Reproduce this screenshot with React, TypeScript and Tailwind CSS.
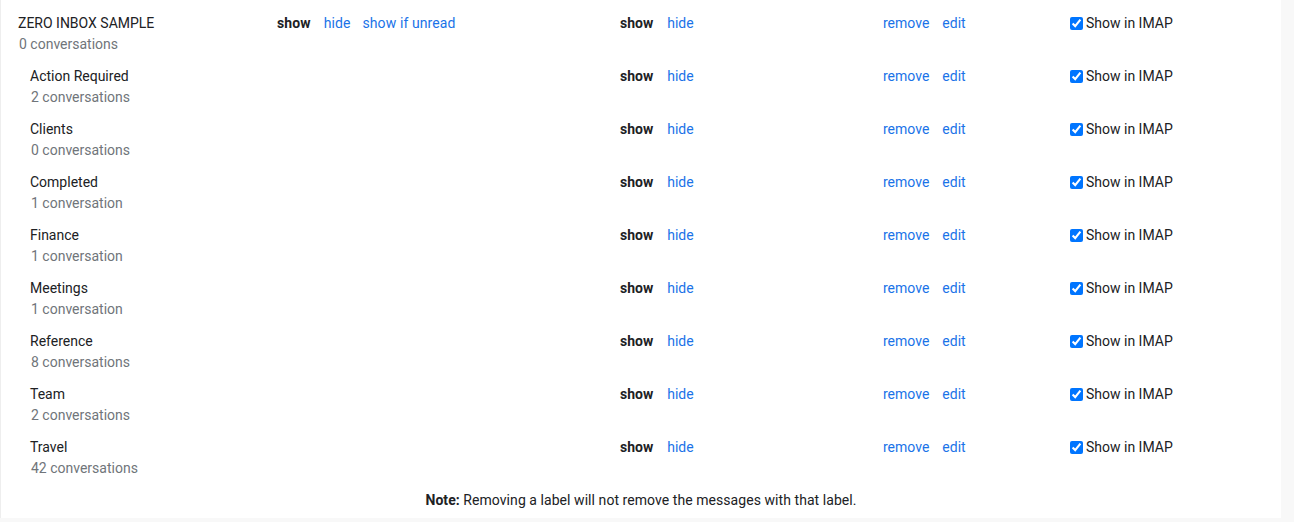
import React from 'react';

interface LabelRow {
  name: string;
  count: string;
  nested: boolean;
  unreadOption?: boolean;
}

const ROWS: LabelRow[] = [
  { name: 'ZERO INBOX SAMPLE', count: '0 conversations', nested: false, unreadOption: true },
  { name: 'Action Required', count: '2 conversations', nested: true },
  { name: 'Clients', count: '0 conversations', nested: true },
  { name: 'Completed', count: '1 conversation', nested: true },
  { name: 'Finance', count: '1 conversation', nested: true },
  { name: 'Meetings', count: '1 conversation', nested: true },
  { name: 'Reference', count: '8 conversations', nested: true },
  { name: 'Team', count: '2 conversations', nested: true },
  { name: 'Travel', count: '42 conversations', nested: true },
];

const Link: React.FC<{ children: React.ReactNode }> = ({ children }) => (
  <span className="text-[#1a73e8] cursor-pointer">{children}</span>
);

const LabelRowView: React.FC<{ row: LabelRow }> = ({ row }) => (
  <div className="flex h-[53px] items-start">
    <div className={`w-[276px] shrink-0 ${row.nested ? 'pl-[29px]' : 'pl-[17px]'}`}>
      <div className="leading-5 text-[#202124]">{row.name}</div>
      <div className="mt-[1px] leading-5 text-[#70757a] pl-[1px]">{row.count}</div>
    </div>
    <div className="w-[343px] shrink-0 flex gap-3 leading-5 tracking-[0.1px]">
      {row.unreadOption && (
        <>
          <span className="font-bold text-[#202124] pr-[1px]">show</span>
          <Link>hide</Link>
          <Link>show if unread</Link>
        </>
      )}
    </div>
    <div className="w-[263px] shrink-0 flex gap-[14px] leading-5">
      <span className="font-bold text-[#202124]">show</span>
      <Link>hide</Link>
    </div>
    <div className="w-[186px] shrink-0 flex gap-[13px] leading-5">
      <Link>remove</Link>
      <Link>edit</Link>
    </div>
    <label className="flex items-center leading-5 text-[#202124] pl-[1px]">
      <input type="checkbox" defaultChecked className="w-[13px] h-[13px] m-0 mr-[3px]" />
      Show in IMAP
    </label>
  </div>
);

export default function App() {
  return (
    <div className="w-[1294px] h-[522px] bg-[#f8f8f8] overflow-hidden" style={{ fontFamily: 'Roboto, "Liberation Sans", sans-serif' }}>
      <div className="w-[1281px] bg-white border-l border-[#eeeeee] text-[14px] pt-[13px] pb-[8px]">
        {ROWS.map((row) => (
          <LabelRowView key={row.name} row={row} />
        ))}
        <p className="text-center leading-5 text-[#202124] tracking-[0.06px]">
          <span className="font-bold">Note:</span> Removing a label will not remove the messages with that label.
        </p>
      </div>
    </div>
  );
}
